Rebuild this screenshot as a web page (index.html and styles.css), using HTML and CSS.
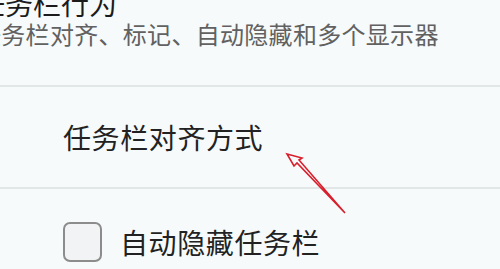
FILE: index.html
```html
<!DOCTYPE html>
<html lang="zh-CN">
<head>
<meta charset="utf-8">
<link rel="stylesheet" href="styles.css">
</head>
<body>
<div class="page">
  <header class="section-head">
    <div class="title">任务栏行为</div>
    <div class="subtitle">任务栏对齐、标记、自动隐藏和多个显示器</div>
  </header>
  <div class="divider"></div>
  <div class="row row-align">
    <span class="label">任务栏对齐方式</span>
  </div>
  <div class="divider"></div>
  <div class="row row-check">
    <span class="checkbox"></span>
    <span class="label">自动隐藏任务栏</span>
  </div>
  <svg class="arrow" width="80" height="80" viewBox="0 0 80 80" xmlns="http://www.w3.org/2000/svg">
    <path d="M7 14 L22 18 L19 20 L65 73 L17 23 L14 26 Z" fill="none" stroke="#d8202c" stroke-width="1.6" stroke-linejoin="miter"/>
  </svg>
</div>
</body>
</html>
```
FILE: styles.css
```css
html, body {
  margin: 0;
  padding: 0;
}
body {
  background: #f6fafb;
  font-family: "Noto Sans CJK SC", "Noto Sans", sans-serif;
  width: 500px;
  height: 269px;
  overflow: hidden;
}
.page {
  position: relative;
  width: 500px;
  height: 269px;
  display: flex;
  flex-direction: column;
}
.section-head {
  margin-left: -23px;
  margin-top: -12px;
  display: flex;
  flex-direction: column;
  height: 97px;
}
.title {
  font-size: 28px;
  line-height: 30px;
  color: #1b1b1b;
  white-space: nowrap;
}
.subtitle {
  font-size: 24px;
  line-height: 32px;
  color: #616161;
  white-space: nowrap;
  letter-spacing: 0.3px;
}
.divider {
  height: 2px;
  background: #e1e7e7;
  flex: none;
}
.row {
  display: flex;
  align-items: center;
  padding-left: 63px;
  flex: none;
}
.row-align {
  height: 100px;
}
.row-check {
  padding-top: 33px;
  gap: 18px;
}
.label {
  font-size: 28px;
  line-height: 40px;
  color: #222222;
  white-space: nowrap;
  letter-spacing: 0.6px;
}
.checkbox {
  width: 35px;
  height: 36px;
  border: 2px solid #8c8c8c;
  border-radius: 7px;
  background: #f1f3f4;
  flex: none;
}
.arrow {
  position: absolute;
  left: 280px;
  top: 140px;
}
```
